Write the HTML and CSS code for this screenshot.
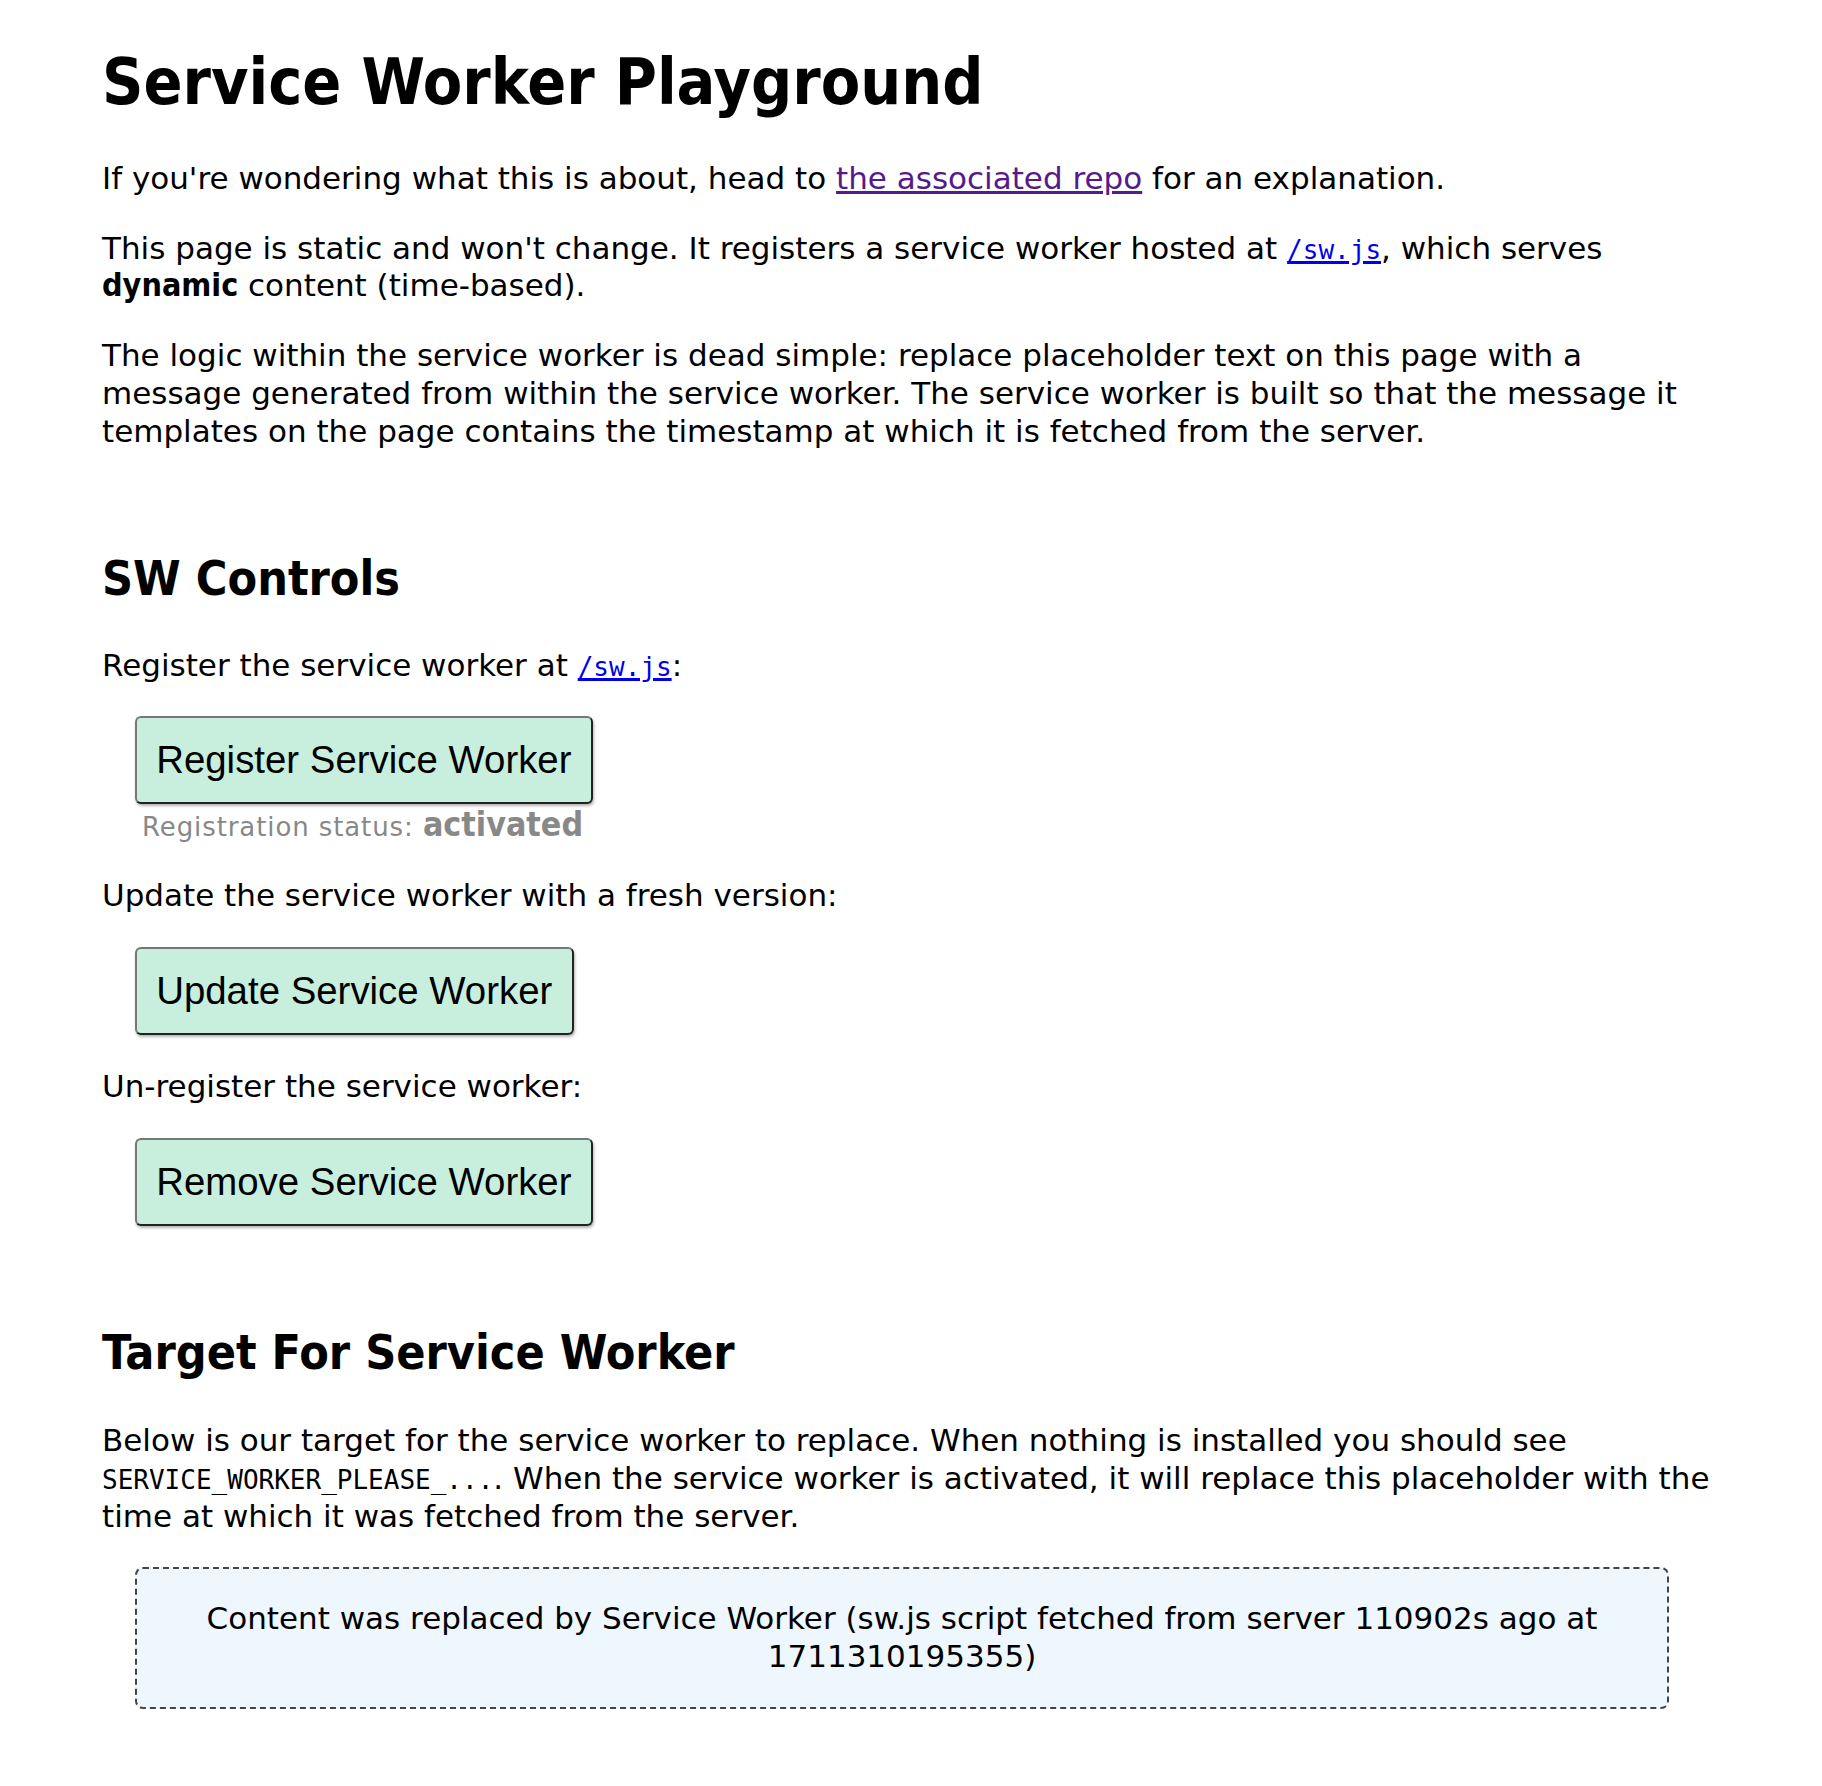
FILE: index.html
```html
<!DOCTYPE html>
<html lang="en">
<head>
<meta charset="utf-8">
<title>Service Worker Playground</title>
<link rel="stylesheet" href="styles.css">
</head>
<body>
<main class="page">
  <h1 class="title">Service Worker Playground</h1>
  <p class="para">If you're wondering what this is about, head to <a class="link link-visited" href="#repo">the associated repo</a> for an explanation.</p>
  <p class="para">This page is static and won't change. It registers a service worker hosted at <a class="link" href="#sw"><code class="code">/sw.js</code></a>, which serves <strong class="strong">dynamic</strong> content (time-based).</p>
  <p class="para">The logic within the service worker is dead simple: replace placeholder text on this page with a message generated from within the service worker. The service worker is built so that the message it templates on the page contains the timestamp at which it is fetched from the server.</p>

  <section class="section">
    <h2 class="heading">SW Controls</h2>
    <p class="para">Register the service worker at <a class="link" href="#sw"><code class="code">/sw.js</code></a>:</p>
    <div class="control"><button class="btn" type="button">Register Service Worker</button></div>
    <div class="status">Registration status: <strong class="status-value">activated</strong></div>
    <p class="para">Update the service worker with a fresh version:</p>
    <div class="control"><button class="btn" type="button">Update Service Worker</button></div>
    <p class="para after-btn">Un-register the service worker:</p>
    <div class="control"><button class="btn" type="button">Remove Service Worker</button></div>
  </section>

  <section class="section section-target">
    <h2 class="heading">Target For Service Worker</h2>
    <p class="para">Below is our target for the service worker to replace. When nothing is installed you should see <code class="code code-plain">SERVICE_WORKER_PLEASE_...</code>. When the service worker is activated, it will replace this placeholder with the time at which it was fetched from the server.</p>
    <div class="target">Content was replaced by Service Worker (sw.js script fetched from server 110902s ago at 1711310195355)</div>
  </section>
</main>
</body>
</html>
```

FILE: styles.css
```css
html, body {
  background: #ffffff;
}

body {
  margin: 0;
  font-family: "DejaVu Sans", "Liberation Sans", sans-serif;
  font-size: 31px;
  line-height: 37.7px;
  color: #000000;
}

.page {
  margin: 0 102px;
  padding: 45px 0 80px 0;
}

.title {
  margin: 0 0 40px 0;
  font-family: "DejaVu Sans Condensed", "DejaVu Sans", sans-serif;
  font-stretch: condensed;
  font-weight: bold;
  font-size: 64px;
  line-height: 75px;
}

.heading {
  margin: 100px 0 40px 0;
  font-family: "DejaVu Sans Condensed", "DejaVu Sans", sans-serif;
  font-stretch: condensed;
  font-weight: bold;
  font-size: 48px;
  line-height: 56.5px;
}

.section {
  margin: 0;
}

.section-target .heading {
  margin-top: 98px;
  margin-bottom: 42px;
}

.para {
  margin: 32px 0;
}

.after-btn {
  margin-top: 33px;
}

.strong {
  font-family: "DejaVu Sans Condensed", "DejaVu Sans", sans-serif;
  font-stretch: condensed;
  font-weight: bold;
  font-size: 32px;
}

.link {
  color: #0000ee;
  text-decoration: underline;
}

.link-visited {
  color: #551a8b;
}

.code {
  font-family: "DejaVu Sans Mono", "Liberation Mono", monospace;
  font-size: 26px;
  line-height: 1;
}

.code-plain {
  color: #000000;
}

.control {
  margin: 32px 0 0 33px;
  display: flex;
}

.btn {
  font-family: "Liberation Sans", Arial, sans-serif;
  font-size: 38.4px;
  line-height: 46px;
  padding: 19px 19.2px;
  color: #000000;
  background: #c8efdd;
  border-width: 2px;
  border-style: solid;
  border-color: #777777 #222222 #222222 #777777;
  border-radius: 6px;
  box-shadow: 1px 2px 3px rgba(0, 0, 0, 0.3);
  cursor: pointer;
}

.status {
  margin: 6px 0 35px 40px;
  font-size: 26px;
  letter-spacing: 0.9px;
  line-height: 30px;
  color: #888888;
}

.status-value {
  font-family: "DejaVu Sans Condensed", "DejaVu Sans", sans-serif;
  font-stretch: condensed;
  font-weight: bold;
  font-size: 33.7px;
  letter-spacing: 0;
}

.target {
  margin: 32px 51px 0 33px;
  padding: 31px;
  border: 2px dashed #444444;
  border-radius: 8px;
  background: #eef6fe;
  text-align: center;
}
```
